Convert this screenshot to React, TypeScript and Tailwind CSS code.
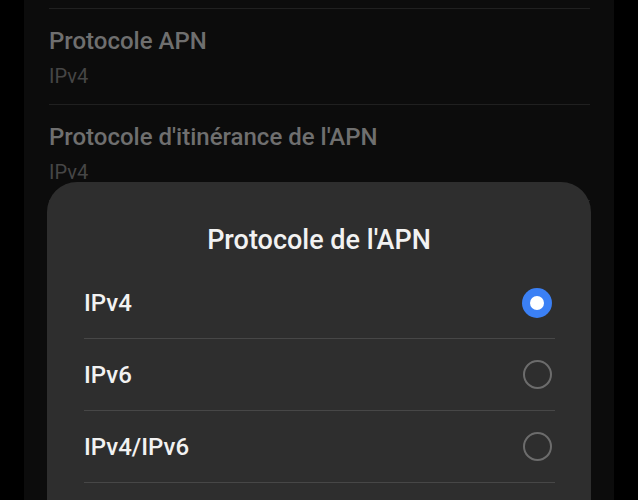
import React from "react";

const options = [
  { label: "IPv4", selected: true },
  { label: "IPv6", selected: false },
  { label: "IPv4/IPv6", selected: false },
];

const bgRows = [
  { title: "Protocole APN", value: "IPv4" },
  { title: "Protocole d'itinérance de l'APN", value: "IPv4" },
  { title: "Type de MVNO", value: "Aucun" },
];

export default function App() {
  return (
    <div
      className="w-[638px] h-[500px] bg-black overflow-hidden flex"
      style={{ fontFamily: "Roboto, 'Noto Sans', sans-serif" }}
    >
      <div className="ml-[24px] w-[590px] h-full bg-[#0c0c0c] relative overflow-hidden">
        <div className="pt-[8px] pl-[25px] pr-[24px]">
          {bgRows.map((r) => (
            <div key={r.title} className="border-t border-[#202020] pt-[16px] pb-[14px]">
              <div className="text-[24px] leading-[32px] font-medium text-[#6f6f6f]">{r.title}</div>
              <div className="mt-[5px] text-[20px] leading-[28px] text-[#464646]">{r.value}</div>
            </div>
          ))}
        </div>

        <div className="absolute top-[182px] left-[23px] w-[544px] h-[360px] bg-[#2e2e2e] rounded-t-[30px] pt-[41px]">
          <div className="text-center text-[27px] leading-[34px] font-medium text-[#f2f2f2] mb-[10px]">
            Protocole de l'APN
          </div>
          <div className="pl-[37px] pr-[36px]">
            {options.map((o) => (
              <div
                key={o.label}
                className="h-[72px] border-b border-[#474747] flex items-center justify-between"
              >
                <span className="text-[24px] leading-[32px] font-medium text-[#f2f2f2]">{o.label}</span>
                {o.selected ? (
                  <span className="mr-[3px] w-[30px] h-[30px] rounded-full bg-[#3b80f5] flex items-center justify-center">
                    <span className="w-[14px] h-[14px] rounded-full bg-white" />
                  </span>
                ) : (
                  <span className="mr-[3px] w-[29px] h-[29px] rounded-full border-2 border-[#6c6c6c]" />
                )}
              </div>
            ))}
          </div>
        </div>
      </div>
    </div>
  );
}
